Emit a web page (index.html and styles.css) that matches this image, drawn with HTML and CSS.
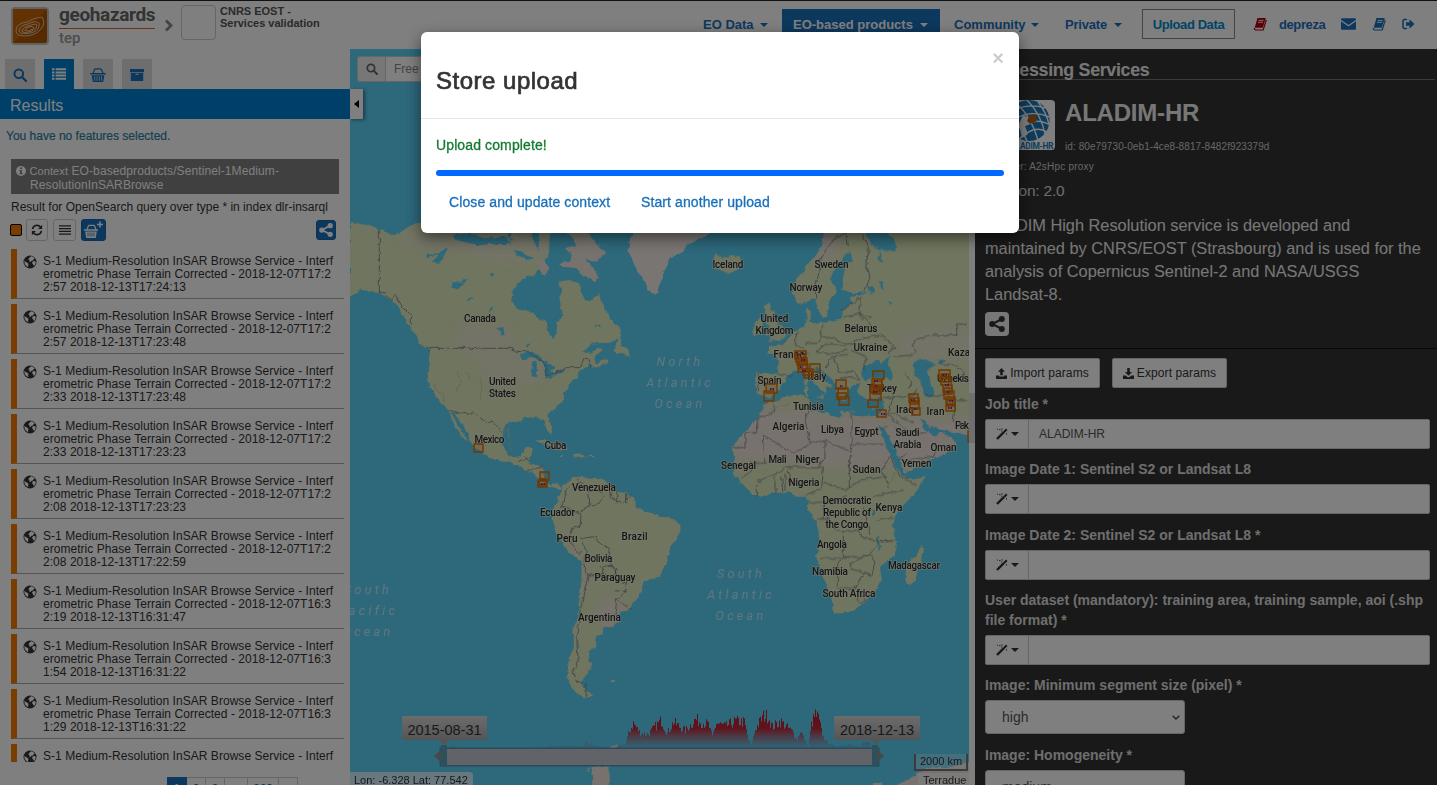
FILE: index.html
```html
<!DOCTYPE html>
<html lang="en">
<head>
<meta charset="utf-8">
<title>Geohazards TEP</title>
<link rel="stylesheet" href="styles.css">
</head>
<body>
<svg width="0" height="0" class="defs" aria-hidden="true">
  <defs>
    <symbol id="i-search" viewBox="0 0 14 14"><circle cx="5.8" cy="5.8" r="4.3" fill="none" stroke="currentColor" stroke-width="2"/><path d="M9 9l4 4" stroke="currentColor" stroke-width="2.4" stroke-linecap="round"/></symbol>
    <symbol id="i-list" viewBox="0 0 14 12"><path d="M0 1.2h2.4M0 4.4h2.4M0 7.6h2.4M0 10.8h2.4M3.6 1.2H14M3.6 4.4H14M3.6 7.6H14M3.6 10.8H14" stroke="currentColor" stroke-width="2"/></symbol>
    <symbol id="i-basket" viewBox="0 0 16 14"><path d="M3 5.5L4.5 1.6Q5 .8 6 .8h4q1 0 1.500 .8L13 5.500" fill="none" stroke="currentColor" stroke-width="1.200"/><path d="M.3 5h15.400v1.600H.3zM1.600 7.300h12.800L13.200 14H2.800z" fill="currentColor"/><path d="M4.600 8.300v4.500M7 8.300v4.500M9.300 8.300v4.500M11.500 8.300v4.500" stroke="#dcdcdc" stroke-width=".8"/></symbol>
    <symbol id="i-box" viewBox="0 0 14 12"><path d="M0 0h14v3.200H0zM.8 4h12.400v8H.8z" fill="currentColor"/><path d="M5.500 5.300h3" stroke="#ddd" stroke-width="1.100"/></symbol>
    <symbol id="i-share" viewBox="0 0 16 16"><path d="M13 3L3.200 8 13 13" fill="none" stroke="currentColor" stroke-width="2"/><circle cx="12.800" cy="3.100" r="3" fill="currentColor"/><circle cx="3.200" cy="8" r="3" fill="currentColor"/><circle cx="12.800" cy="12.900" r="3" fill="currentColor"/></symbol>
    <symbol id="i-globe" viewBox="0 0 14 14"><circle cx="7" cy="7" r="6.500" fill="#333"/><path d="M8.200 1.300l2 .8 1.500 1.700-1.200.4-.5 1.200-1.500.4-1 1.200-1.200-.6.200-1.600-1.400-.4 1.300-1.600zM10 6.300l1.500-.3 1.200.8-.2 2-1.500 2.400-.8-1.800-1.200-1.300zM1.300 5.500l1.400 1.600 1.700.7 1.200 1.300-.6 1.400.3 1.800-2-1.200-1.600-2.200z" fill="#fff"/></symbol>
    <symbol id="i-refresh" viewBox="0 0 14 14"><path d="M1.800 6A5.200 5.200 0 0 1 11 3.600M12.200 8A5.200 5.200 0 0 1 3 10.400" fill="none" stroke="currentColor" stroke-width="1.900"/><path d="M13 1v4.700H8.300zM1 13V8.300h4.700z" fill="currentColor"/></symbol>
    <symbol id="i-bars" viewBox="0 0 12 10"><path d="M0 .8h12M0 3.600h12M0 6.400h12M0 9.200h12" stroke="currentColor" stroke-width="1.300"/></symbol>
    <symbol id="i-book" viewBox="0 0 14 14"><path d="M4.500 1h8.300L9.800 10.800H1.700z" fill="currentColor"/><path d="M1.300 11q0 2 1.600 2h7.300L13.300 2.800" fill="none" stroke="currentColor" stroke-width="1.200"/><path d="M5.600 3.400h5M5 5.300h5" stroke="#fff" stroke-width=".9"/></symbol>
    <symbol id="i-mail" viewBox="0 0 15 12"><path d="M0 1.200Q0 .3 1 .3h13q1 0 1 .9v.5L7.500 7 0 1.700zM0 3.300L7.500 8.600 15 3.300v7.400q0 1-1 1H1q-1 0-1-1z" fill="currentColor"/></symbol>
    <symbol id="i-out" viewBox="0 0 13 12"><path d="M5 1.500H2.500Q1 1.500 1 3v6q0 1.500 1.500 1.500H5" fill="none" stroke="currentColor" stroke-width="1.500"/><path d="M4 4.300h3.500V1.300L12.500 6l-5 4.700v-3H4z" fill="currentColor"/></symbol>
    <symbol id="i-up" viewBox="0 0 12 12"><path d="M6 0l3.800 4H7.400v4H4.600V4H2.200zM0 8.300h3.500v1h5v-1H12V12H0z" fill="currentColor"/></symbol>
    <symbol id="i-down" viewBox="0 0 12 12"><path d="M6 8.500L2.200 4.300h2.400V0h2.800v4.300h2.400zM0 8.300h3l2 1.700h2l2-1.700h3V12H0z" fill="currentColor"/></symbol>
    <symbol id="i-wand" viewBox="0 0 12 12"><path d="M1 11L7.800 4.200" stroke="currentColor" stroke-width="2.400"/><path d="M7.800 4.200L10.800 1.200" stroke="currentColor" stroke-width="2"/><path d="M3 1.600h1.500M6 .2v1.500M10.500 5.200v1.300M1.500.6v1M5 3h1" stroke="currentColor" stroke-width=".9"/></symbol>
  </defs>
</svg>

<header class="top">
  <svg class="brand-logo" viewBox="0 0 38 38"><rect x="1" y="1" width="36" height="36" rx="3" fill="#b05400" stroke="#c4c4c4" stroke-width="2"/><path d="M2 36V2L36 2z" fill="#c46404"/><g fill="none" stroke="#e8cdb0" stroke-width=".9"><path d="M5 24Q5 16 16 15q6-4 15-5 4 6-1 12-6 7-16 7-9 0-9-5z"/><path d="M8 24q1-6 9-7 7-4 11-1 1 6-5 9-13 4-15-1z"/><path d="M11 24q2-5 7-5 6-3 8-1 0 4-5 6-9 3-10 0z"/><path d="M14 23.500q1-4 6-4 4 0 2 2.500-5 3-8 1.500z"/></g></svg>
  <div class="brand"><span class="brand-name">geohazards</span><span class="brand-sub">tep</span></div>
  <svg class="chev" viewBox="0 0 8 12"><path d="M1 1l5 5-5 5" fill="none" stroke="#888" stroke-width="2.800"/></svg>
  <div class="org-box"></div>
  <div class="org">CNRS EOST -<br>Services validation</div>
  <nav class="nav">
    <a class="n1"><span>EO Data</span><i class="caret"></i></a>
    <a class="n2"><span>EO-based products</span><i class="caret"></i></a>
    <a class="n3"><span>Community</span><i class="caret"></i></a>
    <a class="n4"><span>Private</span><i class="caret"></i></a>
    <a class="upload">Upload Data</a>
    <svg class="ic red"><use href="#i-book"/></svg>
    <a class="user">depreza</a>
    <svg class="ic mail"><use href="#i-mail"/></svg>
    <svg class="ic bk"><use href="#i-book"/></svg>
    <svg class="ic out"><use href="#i-out"/></svg>
  </nav>
</header>

<main class="main">
  <aside class="side">
    <div class="tabs">
      <span class="tab"><svg width="14" height="14"><use href="#i-search"/></svg></span>
      <span class="tab on"><svg width="14" height="12"><use href="#i-list"/></svg></span>
      <span class="tab"><svg width="16" height="14"><use href="#i-basket"/></svg></span>
      <span class="tab"><svg width="14" height="12"><use href="#i-box"/></svg></span>
    </div>
    <div class="results-bar">Results</div>
    <p class="nofeat">You have no features selected.</p>
    <div class="context"><svg width="10" height="10" viewBox="0 0 10 10"><circle cx="5" cy="5" r="5" fill="#fff"/><path d="M4 1.500h2v1.400H4zM3.400 4h2.500v3.200h.8v1H3.400v-1h.7V5h-.7z" fill="#808080"/></svg> <small>Context</small> EO-basedproducts/Sentinel-1Medium-<br>ResolutionInSARBrowse</div>
    <p class="query">Result for OpenSearch query over type * in index dlr-insarql</p>
    <div class="tools">
      <span class="swatch"></span>
      <span class="tbtn b1"><svg width="12" height="12"><use href="#i-refresh"/></svg></span>
      <span class="tbtn b2"><svg width="12" height="10"><use href="#i-bars"/></svg></span>
      <span class="tbtn blue b3"><svg width="21" height="18" viewBox="0 0 21 18"><path d="M4 9l1.300-4Q5.700 4.300 6.500 4.300h4q.9 0 1.200.7L13 9" fill="none" stroke="#fff" stroke-width="1.200"/><path d="M1 8.300h14v1.500H1zM2.200 10.500h11.600L12.800 17H3.200z" fill="#fff"/><path d="M5 11.500v4M7 11.500v4M9 11.500v4M11 11.500v4" stroke="#1a70bb" stroke-width=".8"/><path d="M17 .5v6M14 3.500h6" stroke="#fff" stroke-width="1.500"/></svg></span>
      <span class="tbtn blue b4"><svg width="14" height="14"><use href="#i-share"/></svg></span>
    </div>
    <ul class="list">
      <li><svg><use href="#i-globe"/></svg><p>S-1 Medium-Resolution InSAR Browse Service - Interf<br>erometric Phase Terrain Corrected - 2018-12-07T17:2<br>2:57 2018-12-13T17:24:13</p></li>
      <li><svg><use href="#i-globe"/></svg><p>S-1 Medium-Resolution InSAR Browse Service - Interf<br>erometric Phase Terrain Corrected - 2018-12-07T17:2<br>2:57 2018-12-13T17:23:48</p></li>
      <li><svg><use href="#i-globe"/></svg><p>S-1 Medium-Resolution InSAR Browse Service - Interf<br>erometric Phase Terrain Corrected - 2018-12-07T17:2<br>2:33 2018-12-13T17:23:48</p></li>
      <li><svg><use href="#i-globe"/></svg><p>S-1 Medium-Resolution InSAR Browse Service - Interf<br>erometric Phase Terrain Corrected - 2018-12-07T17:2<br>2:33 2018-12-13T17:23:23</p></li>
      <li><svg><use href="#i-globe"/></svg><p>S-1 Medium-Resolution InSAR Browse Service - Interf<br>erometric Phase Terrain Corrected - 2018-12-07T17:2<br>2:08 2018-12-13T17:23:23</p></li>
      <li><svg><use href="#i-globe"/></svg><p>S-1 Medium-Resolution InSAR Browse Service - Interf<br>erometric Phase Terrain Corrected - 2018-12-07T17:2<br>2:08 2018-12-13T17:22:59</p></li>
      <li><svg><use href="#i-globe"/></svg><p>S-1 Medium-Resolution InSAR Browse Service - Interf<br>erometric Phase Terrain Corrected - 2018-12-07T16:3<br>2:19 2018-12-13T16:31:47</p></li>
      <li><svg><use href="#i-globe"/></svg><p>S-1 Medium-Resolution InSAR Browse Service - Interf<br>erometric Phase Terrain Corrected - 2018-12-07T16:3<br>1:54 2018-12-13T16:31:22</p></li>
      <li><svg><use href="#i-globe"/></svg><p>S-1 Medium-Resolution InSAR Browse Service - Interf<br>erometric Phase Terrain Corrected - 2018-12-07T16:3<br>1:29 2018-12-13T16:31:22</p></li>
      <li><svg><use href="#i-globe"/></svg><p>S-1 Medium-Resolution InSAR Browse Service - Interf</p></li>
    </ul>
    <div class="pager"><span class="cur">1</span><span>2</span><span>3</span><span class="w23">...</span><span class="w30">209</span><span>»</span></div>
  </aside>

  <section class="map">
    <svg class="world" width="619" height="736" viewBox="350 49 619 736">
      <defs>
        <filter id="rough" x="0" y="0" width="1" height="1" filterUnits="objectBoundingBox"><feTurbulence type="fractalNoise" baseFrequency=".16" numOctaves="2" seed="4"/><feDisplacementMap in="SourceGraphic" scale="5" xChannelSelector="R" yChannelSelector="G"/></filter>
        <filter id="soft" x="-.3" y="-.3" width="1.600" height="1.600"><feGaussianBlur stdDeviation="16"/></filter>
        <linearGradient id="hist" gradientUnits="userSpaceOnUse" x1="0" y1="709" x2="0" y2="748"><stop offset="0" stop-color="#d01020"/><stop offset=".5" stop-color="#c02838"/><stop offset="1" stop-color="#b06878" stop-opacity=".1"/></linearGradient>
        <path id="na" d="M0-20L60-15 105 5 130 15 160 0 200-20 560-60 600-30 597 70 585 95 555 130 520 150 490 175 484 210 500 235 535 243 560 262 590 272 595 310 610 325 620 310 622 275 640 255 632 230 628 200 635 180 625 155 660 150 690 165 700 200 715 218 735 200 745 190 760 225 785 270 815 300 812 320 780 338 725 340 700 368 715 372 745 352 755 360 738 380 735 402 775 385 770 398 735 418 720 405 690 425 685 440 665 450 655 475 642 490 645 510 600 545 595 560 607 595 605 615 590 600 583 570 560 562 520 565 515 575 485 572 465 585 462 610 458 640 470 670 490 682 515 678 525 655 548 653 545 675 535 685 540 700 575 708 582 720 578 757 600 768 620 758 635 770 630 778 605 770 590 775 565 755 552 728 530 722 505 708 480 695 455 695 425 685 400 670 375 655 365 635 350 610 335 580 318 548 305 547 312 570 325 585 335 605 355 632 335 620 320 600 308 580 295 538 270 515 250 490 237 465 233 430 238 380 240 358 205 340 200 320 180 295 162 260 150 240 130 215 110 200 88 190 30 178 20 190 0 203z"/>
        <path id="ea" d="M500-20L480 60 440 110 405 150 395 190 410 215 430 222 460 205 470 225 480 250 490 265 502 255 505 225 512 205 530 185 515 160 512 140 530 110 550 85 568 60 575 90 555 110 548 150 550 180 580 190 625 187 600 195 570 205 575 222 550 235 545 265 515 272 490 280 450 275 455 250 438 235 440 275 430 290 405 305 385 325 365 345 330 350 325 370 350 380 355 410 350 430 290 428 285 445 290 490 308 497 325 503 340 498 350 485 370 460 385 435 405 418 425 425 450 445 475 470 485 480 497 490 500 480 497 470 512 475 515 465 490 450 465 425 468 408 500 435 525 455 530 485 545 510 560 518 558 495 580 465 598 457 592 480 600 495 625 510 665 500 670 520 662 550 655 560 640 555 600 560 565 545 545 545 540 565 500 550 450 540 445 505 430 495 380 500 340 515 310 525 300 560 270 590 240 620 218 655 225 700 220 730 250 765 275 790 300 800 340 790 385 785 410 800 440 800 445 825 442 835 465 870 475 900 478 940 468 980 485 1020 497 1060 515 1110 525 1150 545 1150 585 1142 620 1110 645 1085 665 1050 660 1010 705 975 708 930 697 880 710 850 740 815 775 780 797 738 740 748 725 735 700 695 680 655 665 615 655 585 668 588 690 625 712 670 728 710 735 728 770 715 810 690 860 670 890 640 870 620 840 605 830 618 800 605 778 570 790 570 815 590 850 600 885 610 927 615 960 620 960-20z"/>
        <path id="sa" d="M635 30L625 60 612 80 605 120 615 150 640 190 655 215 695 245 695 300 690 340 685 400 670 450 672 500 655 545 652 590 668 630 700 655 730 648 705 625 690 610 715 580 728 550 715 540 720 515 738 495 740 470 758 465 760 445 790 440 810 420 805 400 840 385 870 345 880 305 930 288 950 250 960 205 992 150 990 130 960 112 930 110 890 95 860 85 850 50 830 40 800 35 770 5 750-5 690-10 665-5 640 15z"/>
        <clipPath id="eac"><use href="#ea"/></clipPath><clipPath id="nac"><use href="#na"/></clipPath><clipPath id="sac"><use href="#sa"/></clipPath>
      </defs>
      <g filter="url(#rough)">
        <rect class="sea" x="340" y="39" width="640" height="756"/>
        <g transform="translate(350 230) scale(.33333)">
          <use href="#na" class="land"/>
          <g clip-path="url(#nac)"><g filter="url(#soft)" class="dry faint"><ellipse cx="400" cy="330" rx="90" ry="60"/><ellipse cx="490" cy="420" rx="100" ry="50"/><ellipse cx="270" cy="30" rx="120" ry="30"/><ellipse cx="480" cy="50" rx="130" ry="50"/></g></g>
          <path class="land dry" d="M650 5L700-10 740 40 765 70 740 95 705 85 745 130 740 158 700 140 680 115 640 110 630 100 660 95 665 75 645 55 680 45zM560 95l25-5 15 30-20 15-15-20z"/>
          <path class="ice" d="M860-30L840 30 835 60 855 110 880 150 895 180 920 195 930 160 945 130 948 110 960 85 1000 65 1010 45 1080 12 1110-30z"/>
          <path class="land" d="M805 320l-15 45 50 15-5-25-20-8-5-25zM560 630l30 3 35 12 30 10-5 8-35-10-50-18zM670 668l30 4 8 10-35 2zM630 676h10v5h-10zM715 677h16v4h-16z"/>
          <path class="sea" d="M310 15l50-5 40 15 60-5 30 5-10 18-60-2-30 5-50-10-30-8zM228 75l40-5 20-15 2 15-30 30-10-2 15-25-35 8zM300 175l10-22 20 2 25-12-15 20-20 18zM348 210l18-10 5 5-20 10zM415 240l5-10 6 0-5 18zM422 130h9v12h-9zM435 300l20-12 12 28-12 0-8-18zM510 375l35-10 30 15 0 12-25-8-35 4zM545 400l15-5 0 45-15 5zM575 390l20 0 0 15 20 0-15 30-10 0zM583 442l30-15 25-8 5 3-25 14-30 10zM735 285h15v6h-15zM530 340h10v8h-10zM110 0l20 12 25-5-5-10zM470 0l8 50 6-40zM540-20l10 50 14 30 4-20-10-50zM490 60l30 10 30 15-20 5-30-15z"/>
          <path class="bd" d="M88 0V188l15 0 22 22 12-14 22 38 25 25v25M240 355H483l10 8 45 4 20 14 20 12 12 22 0 22 40-14 18-10 42 0 12-28 15 2 5 24M240 355l-6 12M296 541l55 12 20-5 40 30 15-8 30 35M505 695l20-10v-5l12 20M530 720l20 0 30-14"/>
          <path class="hill" d="M245 460l30 35 10 20M320 420l10 30-10 40M390 440l5 30-5 40M350 430l10 20M470 590l15 80"/>
        </g>
        <g transform="translate(660 230) scale(.33333)">
          <use href="#ea" class="land"/>
          <g clip-path="url(#eac)"><g filter="url(#soft)" class="dry"><path d="M200 590L320 530 560 550 660 560 960 560 960 720 700 710 560 720 400 700 200 690z"/><ellipse class="faint" cx="830" cy="340" rx="130" ry="50"/><ellipse cx="480" cy="30" rx="60" ry="60"/></g></g>
          <path class="land" d="M160 92l6-18 20 8 30-6 25 4 8 20-14 18-30 14-26-12-20-8zM315 225l15-7-2 22 17 5v25l20 20 13 15-6 20-27 10h-27l17-15-15-5 5-25-7-20-6-25zM280 290l20-28 10 18-5 30-25 8zM435 470l8-3 0 30-8 0zM435 450l7-3 0 15-6 2zM470 498l20-3-3 12zM630 535l15-3-8 7zM560 540l25 3v4z"/>
          <path class="land" transform="translate(0 750)" d="M785 195l7 20-12 35-15 50-15 12-15-12 3-30 7-25 25-20z"/>
          <path class="sea" d="M608 412l32-17 15-5 8 12 27-22-8 20 18 28-8 20-42-6-35 8-12-18zM770 390l30-5 25 20-25 15 8 32 14 20-5 28-24-4-8-38-22-28-5-20zM615 10l30 45 55 12 15-18-20-30-20-15zM622 170l16-2 6 20-16 6zM655 155l10 0 8 20-8 2zM682 213l12 4-6 8zM835 395l20-8v8l-20 8zM635 840l12-4 2 20-12 2zM650 920l8 0 2 42-4 0zM660 60l10 40-12-6z"/>
          <path class="bd" d="M468 215L465 170 475 140 480 90 500 55 530 20 560 10 565 50M605 10l20 40-5 60 10 30-15 45M545 240l60-40M550 265l40-15 45 10M600 205v55l20 10 25 35M490 285l-10 20 5 15M415 305l-10 35 40 30M485 320l-15 20-35 0M485 320l40 5 35 20 50-20 50-10 45 35-20 25M560 350l-60-10-35 30 50 0 45-10M565 370l-60 15-5 30M520 385l20 40 40 0 20 20M575 360l40 20 0 40M540 450l30-10 30 10M295 430v55M350 432l45 8M700 380l60-5M765 370l-5-40 60-15 70 0 0-30 30-5M735 430l20 25-10 25M668 505l90-10 10-15M700 500l-15 50 30 5 45 25M790 490l40 10 35-10 0-35 50-10M865 490l20 40-5 45M880 510h45M840 400l45 5 30 25M340 518l5 25-50 20-5 25M290 588v20H255v45H220M310 615l5 85h-45M310 615l90 55 60-35M445 540l-10 30 15 65 45-5 75 35M495 632v50l-20 30M576 550v95M576 643h95M576 643l-8 55 0 80M490 715l-110-5-40 25-50 20M390 760l-5-40M490 715l-5 60-45 20M490 760l70 20 40-30 80-10M690 680l30 60 50 25M690 680l-25 40 15 35 5 20M640 800l40-10 50-10M650 870l50-5M245 745l35-30M290 765l0 35M345 740v50M375 730v50M365 740l3 45M445 817h50l-5 50M465 870l40-5 30 40 60-5 10 20 55 15M550 905v75h70l40-45 25 0M480 985h90M535 990v80M530 1075h55l30-50 20 10M570 1000l60-28 15 25-10 40-60-20zM590 1105l15-10 10 15-10 10zM510 870l-20-45 70-25M685 590l-20 10M740 670l-30 20M830 655l-10 25-80 10M685 555l60 50 55 5M475 705l20-20M610 830l20 80M660 936l46-6"/>
          <path class="hill" d="M680 770l30-50M700 590l30 30M860 500l30-20M455 510l30 10M330 540l60-20"/>
        </g>
        <g transform="translate(350 480) scale(.33333)">
          <use href="#sa" class="land"/>
          <g clip-path="url(#sac)"><g filter="url(#soft)" class="dry"><ellipse cx="700" cy="300" rx="18" ry="50"/><ellipse cx="780" cy="400" rx="40" ry="50"/><ellipse cx="670" cy="220" rx="20" ry="20"/></g></g>
          <path class="land dry" d="M775 603l25-5-8 10zM778 805l20-12 2 8-15 10zM725 858h50l2 60h-50zM705 870l15-8-5 15z"/>
          <path class="bd" d="M670 10l-20 20-15 50 40 15 20 10M685 0l30 30 5 45-25 15-5 50-25 5-10 35 30 40 10-2M715 30l30 0 20 20-30 30-20-10M780 10l5 45 30 15 35-30M800 35v35M830 42l0 25M688 175l50-5 5 15 35 20-5 35 25 30-5 25-35-3v-25l-10-10M700 190l10 30-10 30 15 35M715 285l-15 60-12 60-8 80 5 60-15 30 10 32 30 5M710 285l60-2M760 260l25-5 15 30 15 25 15-5-5 30-30-3M800 360l30-30M800 360l42 27M800 355l-5 50M708 610v40"/>
        </g>
        <path class="land dry" d="M893 787l22-12 12-7 20 0 30-8v40h-84zM872 783h10v5h-10z"/>
      </g>
      <g class="lbl">
        <text x="480" y="321.500" textLength="32">Canada</text><text x="502.500" y="384.500" textLength="27">United</text><text x="502.500" y="396.500" textLength="27">States</text><text x="489.500" y="442.500" textLength="30">Mexico</text><text x="555.500" y="448.500" textLength="22">Cuba</text><text x="594" y="490.500" textLength="44">Venezuela</text><text x="557.500" y="516" textLength="35">Ecuador</text><text x="567" y="541.500" textLength="21">Peru</text><text x="634.500" y="540" textLength="26">Brazil</text><text x="598.500" y="561.500" textLength="28">Bolivia</text><text x="615" y="580.500" textLength="41">Paraguay</text><text x="599.500" y="620.500" textLength="43">Argentina</text>
        <text x="728" y="267.500" textLength="31">Iceland</text><text x="831.500" y="267.500" textLength="34">Sweden</text><text x="806" y="291" textLength="33">Norway</text><text x="774.500" y="322" textLength="28">United</text><text x="774.500" y="334" textLength="38">Kingdom</text><text x="861" y="331.500" textLength="33">Belarus</text><text x="870.500" y="351" textLength="34">Ukraine</text><text x="789" y="357.500" textLength="31">France</text><text x="769.500" y="383.500" textLength="24">Spain</text><text x="817" y="379.500" textLength="19">Italy</text><text x="882" y="392" textLength="30">Turkey</text><text x="808.500" y="409.500" textLength="31">Tunisia</text><text x="788.500" y="429.500" textLength="32">Algeria</text><text x="832.500" y="433" textLength="23">Libya</text><text x="866.500" y="435" textLength="24">Egypt</text><text x="905" y="412.500" textLength="18">Iraq</text><text x="935.500" y="414.500" textLength="18">Iran</text><text x="907.500" y="436" textLength="24">Saudi</text><text x="907.500" y="448" textLength="28">Arabia</text><text x="943.500" y="450.500" textLength="26">Oman</text><text x="916.500" y="467" textLength="30">Yemen</text><text x="738.500" y="469" textLength="35">Senegal</text><text x="777.500" y="462.500" textLength="18">Mali</text><text x="807.500" y="462.500" textLength="24">Niger</text><text x="866.500" y="473" textLength="28">Sudan</text><text x="804" y="485.500" textLength="31">Nigeria</text><text x="847" y="504" textLength="49">Democratic</text><text x="847" y="516" textLength="48">Republic of</text><text x="847" y="528" textLength="43">the Congo</text><text x="889" y="511" textLength="27">Kenya</text><text x="832" y="547.500" textLength="30">Angola</text><text x="830" y="574.500" textLength="36">Namibia</text><text x="849" y="597" textLength="53">South Africa</text><text x="914" y="569" textLength="52">Madagascar</text>
        <text x="948" y="355.500" class="st">Kaza</text><text x="937" y="381.500" class="st" textLength="32">Uzbekis</text><text x="955" y="429" class="st" textLength="14">Pak</text>
      </g>
      <g class="fp">
        <path d="M474 444h9v8h-9zM540 472h9v8h-9zM539 479h7v6h-7zM538 481h9v6h-9zM795 351h11v8h-11zM797 358h10v7h-10zM798 364h10v8h-10zM803 369h10v6h-10zM810 364h10v8h-10zM766 384h11v9h-11zM764 391h10v10h-10zM836 380h10v9h-10zM838 388h10v9h-10zM839 397h10v8h-10zM873 371h11v8h-11zM872 379h10v8h-10zM871 385h10v8h-10zM870 391h11v9h-11zM868 400h10v7h-10zM877 410h9v7h-9zM909 394h9v8h-9zM910 401h9v8h-9zM912 408h8v7h-8zM939 370h11v9h-11zM941 377h10v8h-10zM943 385h9v7h-9zM944 391h10v8h-10zM946 397h9v8h-9zM946 404h9v7h-9z"/>
        <path d="M796 354h9v8h-9zM799 361h8v8h-8zM804 371h9v7h-9zM837 393h9v6h-9zM874 381h8v8h-8zM873 388h8v6h-8zM910 398h9v6h-9zM941 374h8v8h-8zM944 388h8v6h-8zM947 400h8v6h-8zM968 431h8v11h-8z"/>
        <path class="core" d="M797 355h3M802 354h3M801 360h4M800 367h3M802 371h4M770 389h5M840 386h3M874 381h5M875 386h3M873 392h5M911 400h4M914 409h3M943 375h5M945 385h4M947 392h3M949 401h4M948 408h5M881 414h4M541 484h4"/>
      </g>
      <g class="oc">
        <text x="680" y="366">North</text><text x="680" y="387">Atlantic</text><text x="680" y="408">Ocean</text>
        <text x="741" y="578">South</text><text x="741" y="599">Atlantic</text><text x="741" y="620">Ocean</text>
        <text x="368" y="594">South</text><text x="368" y="615">Pacific</text><text x="368" y="636">Ocean</text>
      </g>
      <g id="bars" fill="url(#hist)"></g>
    </svg>
    <div class="geo-search"><span class="gi"><svg width="12" height="12"><use href="#i-search"/></svg></span><span class="gt">Free</span></div>
    <span class="collapse"></span>
    <span class="slider"><i class="al"></i><i class="hl"></i><i class="hr"></i><i class="ar"></i></span>
    <span class="date d1">2015-08-31</span>
    <span class="date d2">2018-12-13</span>
    <span class="lonlat">Lon: -6.328 Lat: 77.542</span>
    <span class="scale">2000 km</span>
    <span class="attr">Terradue</span>
  </section>
  <div class="scroll"><i></i></div>

  <aside class="proc">
    <h3 class="ph">Processing Services</h3>
    <div class="svc">
      <svg width="50" height="50" viewBox="0 0 50 50"><rect width="50" height="50" rx="4" fill="#fff"/><circle cx="24" cy="20.500" r="20.500" fill="#1c78bb"/><g fill="none" stroke="#fff" stroke-width="1.400"><path d="M3 13Q22 2 40 8M3 23Q24 8 44 17M6 32Q28 15 45 25M14 39Q30 24 42 32M12 4q14 12 21 36M22 0q14 14 18 34M3 14q12 10 19 27M33 2q8 10 11 22"/></g><path d="M14 24l4-9 6 3 2 6-6 2 3 8-6 4z" fill="#fff"/><path d="M24 16l6-2 2 7-7 3-3-3z" fill="#b06010"/><text x="27" y="49" text-anchor="middle" class="lg" textLength="43">ALADIM-HR</text></svg>
      <div class="svc-t"><h2>ALADIM-HR</h2><p>id: 80e79730-0eb1-4ce8-8817-8482f923379d</p></div>
    </div>
    <p class="prov">Provider: A2sHpc proxy</p>
    <p class="ver">Version: 2.0</p>
    <p class="desc">ALADIM High Resolution service is developed and<br>maintained by CNRS/EOST (Strasbourg) and is used for the<br>analysis of Copernicus Sentinel-2 and NASA/USGS<br>Landsat-8.</p>
    <span class="pshare"><svg width="16" height="16"><use href="#i-share"/></svg></span>
    <div class="form">
      <div class="btns"><span class="btn"><svg width="11" height="11"><use href="#i-up"/></svg>Import params</span><span class="btn"><svg width="11" height="11"><use href="#i-down"/></svg>Export params</span></div>
      <label class="l1">Job title *</label>
      <div class="inp"><span class="add"><svg width="12" height="12"><use href="#i-wand"/></svg><i class="caret"></i></span><span class="val">ALADIM-HR</span></div>
      <label class="l2">Image Date 1: Sentinel S2 or Landsat L8</label>
      <div class="inp"><span class="add"><svg width="12" height="12"><use href="#i-wand"/></svg><i class="caret"></i></span></div>
      <label class="l3">Image Date 2: Sentinel S2 or Landsat L8 *</label>
      <div class="inp"><span class="add"><svg width="12" height="12"><use href="#i-wand"/></svg><i class="caret"></i></span></div>
      <label class="l2">User dataset (mandatory): training area, training sample, aoi (.shp<br>file format) *</label>
      <div class="inp"><span class="add"><svg width="12" height="12"><use href="#i-wand"/></svg><i class="caret"></i></span></div>
      <label class="l2">Image: Minimum segment size (pixel) *</label>
      <div class="sel">high<svg width="8" height="5" viewBox="0 0 8 5"><path d="M.7.7L4 4 7.300.7" fill="none" stroke="#444" stroke-width="1.300"/></svg></div>
      <label class="l3">Image: Homogeneity *</label>
      <div class="sel">medium</div>
    </div>
  </aside>
</main>

<div class="backdrop"></div>
<div class="modal">
  <div class="mh"><h4>Store upload</h4><span class="x">×</span></div>
  <div class="mb">
    <p class="ok">Upload complete!</p>
    <div class="bar"></div>
    <div class="acts"><a class="a1">Close and update context</a><a class="a2">Start another upload</a></div>
  </div>
</div>
<script src="histogram.js"></script>
</body>
</html>
```

FILE: styles.css
```css
* { box-sizing: border-box; }
html, body { height: 100%; }
body { margin: 0; overflow: hidden; background: #fff; font-family: "Liberation Sans", Arial, sans-serif; color: #333; display: flex; flex-direction: column; }
h2, h3, h4, p, ul { margin: 0; padding: 0; font-weight: normal; list-style: none; }
.defs { position: absolute; }
svg { display: block; flex: none; }
.caret { display: inline-block; width: 0; height: 0; border: 4px solid transparent; border-top-color: currentColor; border-bottom: 0; flex: none; }

.top { height: 49px; flex: none; border-top: 1px solid #222; display: flex; align-items: flex-start; padding-left: 11px; }
.brand-logo { width: 38px; height: 38px; margin-top: 6px; }
.brand { margin-left: 10px; width: 96px; display: flex; flex-direction: column; font-family: Roboto, sans-serif; font-weight: 700; white-space: nowrap; }
.brand-name { height: 28px; border-bottom: 1px solid #d06a30; font-size: 19px; line-height: 28px; letter-spacing: -.35px; color: #666; }
.brand-sub { font-size: 15px; line-height: 18px; color: #999; font-weight: 500; }
.chev { width: 8px; height: 13px; margin: 18px 0 0 10px; }
.org-box { width: 35px; height: 35px; margin: 4px 0 0 8px; border: 1px solid #ccc; border-radius: 4px; }
.org { margin: 4px 0 0 4px; width: 120px; font-size: 11px; line-height: 12px; font-weight: 700; color: #555; white-space: nowrap; }
.nav { margin: 8px 0 0 auto; width: 734px; display: flex; height: 41px; font-size: 13px; font-weight: 700; color: #1a70bb; white-space: nowrap; }
.nav a { display: flex; align-items: center; height: 30px; }
.nav .caret { margin: 2px 0 0 6px; }
.n1 { width: 79px; } .n1 span { width: 51px; }
.nav .n2 { width: 158px; height: 41px; padding: 0 0 11px 11px; background: #1a70bb; color: #fff; } .n2 span { width: 121px; }
.n3 { width: 111px; margin-left: 14px; } .n3 span { width: 71px; }
.n4 { width: 77px; letter-spacing: -.2px; } .n4 span { width: 43px; }
.nav .upload { width: 93px; justify-content: center; border: 1px solid #888; color: #0088cc; letter-spacing: -.4px; }
.ic { width: 14px; height: 14px; margin-top: 8px; }
.red { color: #b0000c; margin-left: 18px; }
.user { width: 46px; margin-left: 12px; letter-spacing: -.4px; }
.mail { width: 15px; height: 12px; margin: 9px 0 0 16px; }
.bk { margin-left: 16px; }
.out { width: 13px; height: 12px; margin: 9px 0 0 16px; }

.main { flex: 1; display: flex; min-height: 0; }
.side { width: 350px; flex: none; display: flex; flex-direction: column; overflow: hidden; white-space: nowrap; }
.tabs { display: flex; gap: 9px; padding: 10px 0 0 5px; flex: none; }
.tab { width: 30px; height: 30px; background: #dcdcdc; color: #1a70bb; display: flex; align-items: center; justify-content: center; padding-top: 2px; }
.tab.on { background: #0080d0; color: #fff; padding-top: 0; }
.results-bar { height: 30px; flex: none; background: #0080d0; color: #fff; font-size: 16px; line-height: 33px; padding-left: 10px; }
.nofeat { height: 40px; flex: none; padding: 8px 0 0 6px; font-size: 12px; line-height: 18px; color: #2a80a5; -webkit-text-stroke: .2px; }
.context { width: 328px; height: 35px; flex: none; margin-left: 11px; background: #808080; color: #fff; font-size: 12px; letter-spacing: .1px; line-height: 14px; padding: 5px 0 0 19px; }
.context svg { display: inline-block; margin: 0 0 -1px -14px; }
.context small { font-size: 11px; }
.query { padding: 5px 0 0 11px; font-size: 12px; line-height: 16px; height: 24px; flex: none; }
.tools { display: flex; align-items: center; height: 23px; margin-bottom: 2px; padding-left: 10px; flex: none; }
.swatch { width: 12px; height: 12px; background: #f57b00; border: 1px solid #000; border-radius: 2px; }
.tbtn { height: 22px; border: 1px solid #ccc; border-radius: 3px; display: flex; align-items: center; justify-content: center; }
.b1 { width: 22px; margin-left: 4px; } .b2 { width: 23px; margin-left: 5px; }
.blue { background: #1a70bb; border-color: #1a65aa; color: #fff; }
.b3 { width: 25px; margin-left: 5px; } .b4 { width: 20px; height: 20px; margin-left: auto; margin-right: 14px; }
.list { height: 519px; flex: none; margin: 0 6px 0 11px; padding-top: 6px; overflow: hidden; }
.list li { height: 50px; margin-bottom: 5px; border-left: 6px solid #f57b00; border-bottom: 1px solid #aaa; display: flex; padding: 6px 0 0 6px; }
.list svg { width: 14px; height: 14px; }
.list p { margin-left: 6px; font-size: 12px; line-height: 13px; letter-spacing: .04px; }
.pager { display: flex; margin: 15px 0 0 167px; font-size: 12px; font-weight: 700; color: #1a70bb; }
.pager span { width: 19px; height: 24px; flex: none; border: 1px solid #ccc; border-left: 0; text-align: center; line-height: 22px; }
.pager .cur { width: 20px; background: #1a70bb; border-color: #1a70bb; color: #fff; }
.pager .w23 { width: 23px; } .pager .w30 { width: 31px; }

.map { width: 619px; flex: none; position: relative; overflow: hidden; background: #5ad0f6; }
.sea { fill: #5ad0f6; }
.land { fill: #dfeabd; }
.dry { fill: #efe5da; }
.faint { opacity: .6; }
.ice { fill: #f3ebe5; }
.bd { fill: none; stroke: #80808a; stroke-width: 2.5; }
.hill { fill: none; stroke: #c8cfa8; stroke-width: 3; }
.fp path { fill: #e87400; fill-opacity: .12; stroke: #e07000; stroke-width: 1.400; }
.fp .core { fill: none; stroke: #a01890; stroke-width: 2; stroke-dasharray: 1.500 1; }
.lbl text { font: 500 10px Roboto, sans-serif; fill: #2a2a2a; stroke: #f2f4e0; stroke-width: 1.600px; stroke-opacity: .65; paint-order: stroke; text-anchor: middle; }
.lbl .st { text-anchor: start; }
.oc text { font: italic 400 12.500px Roboto, sans-serif; fill: #c4ecff; text-anchor: middle; letter-spacing: 3.300px; }
.geo-search { position: absolute; left: 7px; top: 7px; display: flex; height: 26px; width: 200px; font-size: 12px; line-height: 25px; color: #888; white-space: nowrap; }
.gi { width: 29px; background: #eee; border: 1px solid #ccc; border-radius: 3px 0 0 3px; display: flex; align-items: center; justify-content: center; color: #666; }
.gt { flex: 1; background: #fff; border: 1px solid #ccc; border-left: 0; padding-left: 8px; }
.collapse { position: absolute; left: 0; top: 40px; width: 13px; height: 30px; background: #fff; box-shadow: 2px 1px 3px rgba(0,0,0,.4); }
.collapse::before { content: ""; position: absolute; left: 4px; top: 11px; border: 4.500px solid transparent; border-left: 0; border-right: 5px solid #000; }
.slider { position: absolute; left: 91px; top: 700px; width: 437px; height: 16px; background: #c4c4d2; box-shadow: 0 0 0 1.500px #4f98b8; }
.slider i { position: absolute; }
.hl, .hr { width: 6px; height: 22px; top: -4px; background: #5ba0ba; }
.hl { left: 0; } .hr { right: 0; }
.al, .ar { top: 1px; border: 6px solid transparent; }
.al { left: -7px; border-left: 0; border-right: 7px solid #909090; } .ar { right: -6px; border-right: 0; border-left: 7px solid #909090; }
.date { position: absolute; top: 667px; width: 85px; height: 24px; background: linear-gradient(#d8d8d8, #aaa); font-size: 14.500px; line-height: 28px; text-align: center; }
.date::after { content: ""; position: absolute; left: 37px; top: 24px; border: 5px solid transparent; border-top-color: #aaa; border-bottom: 0; }
.d1 { left: 52px; } .d2 { left: 484px; width: 86px; }
.lonlat { position: absolute; left: 0; bottom: 0; width: 123px; height: 13px; padding-left: 4px; background: rgba(255,255,255,.7); border-radius: 0 4px 0 0; font-size: 11px; line-height: 16px; }
.scale { position: absolute; right: 1px; top: 705px; width: 54px; height: 17px; border: 2px solid #777; border-top: 0; background: rgba(255,255,255,.3); font-size: 11px; line-height: 15px; text-align: center; }
.attr { position: absolute; right: 0; bottom: 0; width: 51px; height: 12px; background: rgba(255,255,255,.7); font-size: 11px; line-height: 15px; padding-left: 5px; }
.scroll { width: 6px; flex: none; background: #fff; padding-top: 344px; }
.scroll i { display: block; height: 50px; background: #dedede; }

.proc { flex: 1; background: #333; color: #eee; padding-left: 10px; white-space: nowrap; overflow: hidden; }
.ph { height: 31px; margin-right: 2px; border-bottom: 1px solid #777; font-size: 17.900px; line-height: 42px; font-weight: 700; letter-spacing: -.35px; text-indent: -4px; }
.svc { display: flex; margin: 20px 0 0 20px; height: 50px; }
.lg { font: 700 8.500px Roboto, sans-serif; fill: #1c78bb; stroke: #fff; stroke-width: 1px; paint-order: stroke; }
.svc-t { margin-left: 10px; }
.svc-t h2 { font-size: 24px; line-height: 26px; font-weight: 700; letter-spacing: -.2px; }
.svc-t p { font-size: 10px; line-height: 12px; margin-top: 15px; color: #ccc; letter-spacing: .08px; }
.prov { font-size: 10px; line-height: 12px; margin-top: 11px; color: #ccc; letter-spacing: .2px; }
.ver { font-size: 15.500px; line-height: 20px; margin-top: 8px; color: #ddd; letter-spacing: -.2px; }
.desc { font-size: 16.350px; line-height: 23px; margin-top: 13px; }
.pshare { width: 24px; height: 24px; margin-top: 6px; background: #eee; border-radius: 4px; display: flex; align-items: center; justify-content: center; color: #333; }
.form { margin: 12px 0 0 -10px; padding: 9px 7px 0 10px; border-top: 1px solid #111; }
.btns { display: flex; gap: 12px; }
.btn { width: 115px; height: 30px; background: #fff; border: 1px solid #ccc; border-radius: 2px; color: #333; font-size: 12px; display: flex; align-items: center; justify-content: center; gap: 3px; letter-spacing: .1px; }
label { display: block; font-size: 14px; line-height: 20px; font-weight: 700; color: #ddd; }
.l1 { margin: 6px 0 5px; } .l2 { margin: 10px 0 5px; } .l3 { margin: 11px 0 5px; }
.inp { height: 30px; display: flex; background: #fff; border: 1px solid #ccc; border-radius: 2px; color: #555; font-size: 12px; line-height: 28px; }
.add { width: 43px; border-right: 1px solid #ccc; display: flex; align-items: center; padding-left: 10px; gap: 3px; color: #333; }
.val { padding-left: 10px; }
.sel { position: relative; width: 200px; height: 34px; background: #fff; border: 1px solid #ccc; border-radius: 3px; color: #555; font-size: 14px; line-height: 34px; padding: 0 4px 0 16px; display: flex; align-items: center; justify-content: space-between; }

.backdrop { position: fixed; inset: 0; background: rgba(0,0,0,.5); }
.modal { position: fixed; left: 421px; top: 32px; width: 598px; height: 201px; background: #fff; border-radius: 6px; box-shadow: 0 5px 15px rgba(0,0,0,.5); }
.mh { height: 87px; border-bottom: 1px solid #e5e5e5; display: flex; justify-content: space-between; padding: 15px; }
.mh h4 { font-size: 24px; line-height: 28px; margin-top: 20px; color: #333; letter-spacing: .5px; -webkit-text-stroke: .7px #333; }
.x { font-size: 20px; font-weight: 700; line-height: 23px; color: #ccc; }
.mb { padding: 16px 15px; font-size: 14px; line-height: 20px; }
.ok { color: #157a30; letter-spacing: .12px; -webkit-text-stroke: .3px; }
.bar { height: 6px; margin-top: 15px; border-radius: 3px; background: #0069ff; }
.acts { display: flex; padding: 16px 13px; color: #1a70bb; letter-spacing: .1px; -webkit-text-stroke: .3px; }
.a1 { width: 192px; }
```

FILE: histogram.js
```js
// Acquisition density along the time axis: [x, height] control points.
var pts = [[451,3],[455,2],[458,0],[530,0],[545,1],[553,3],[560,2],[568,3],[575,2],[583,2],[586,6],[592,3],[600,1],[615,2],[625,4],[628,16],[633,29],[640,17],[648,16],[655,25],[661,32],[667,17],[673,30],[685,20],[695,33],[708,27],[712,13],[716,29],[725,25],[735,31],[744,30],[748,10],[751,3],[755,22],[763,37],[768,37],[772,24],[780,31],[786,25],[792,19],[797,10],[800,20],[806,5],[808,1],[811,27],[815,39],[818,35],[822,15],[827,6],[835,2],[850,4],[858,1],[863,6],[870,8]];
var g = document.getElementById('bars');
var seed = 7;
for (var x = 451, i = 0; x < 870; x += 1) {
  while (pts[i + 1][0] < x) i++;
  var t = (x - pts[i][0]) / (pts[i + 1][0] - pts[i][0]);
  seed = (seed * 16807) % 2147483647;
  var h = (pts[i][1] + t * (pts[i + 1][1] - pts[i][1])) * (0.66 + 0.4 * seed / 2147483647);
  var r = document.createElementNS('http://www.w3.org/2000/svg', 'rect');
  r.setAttribute('x', x);
  r.setAttribute('y', 748 - h);
  r.setAttribute('width', 1);
  r.setAttribute('height', h);
  g.appendChild(r);
}
```
